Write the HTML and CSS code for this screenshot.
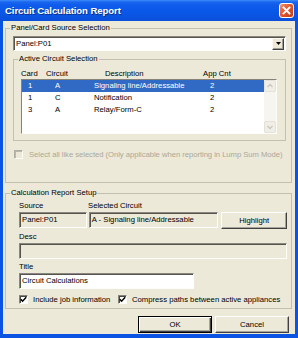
FILE: index.html
```html
<!DOCTYPE html>
<html>
<head>
<meta charset="utf-8">
<link rel="stylesheet" href="styles.css">
</head>
<body>
<div class="window">
  <div class="titlebar">
    <span class="title">Circuit Calculation Report</span>
    <span class="close">
      <svg width="15" height="15" viewBox="0 0 15 15">
        <defs>
          <linearGradient id="cg" x1="0" y1="0" x2="1" y2="1">
            <stop offset="0" stop-color="#F09A7C"/>
            <stop offset="0.45" stop-color="#E2582F"/>
            <stop offset="1" stop-color="#C23A12"/>
          </linearGradient>
        </defs>
        <rect x="0.5" y="0.5" width="14" height="14" rx="2.5" fill="url(#cg)" stroke="#fff"/>
        <path d="M4.5 4.5 L10.5 10.5 M10.5 4.5 L4.5 10.5" stroke="#fff" stroke-width="1.8" stroke-linecap="square"/>
      </svg>
    </span>
  </div>
  <div class="content">
    <fieldset class="group g1">
      <legend>Panel/Card Source Selection</legend>
      <div class="combo">
        <span class="combo-text">Panel:P01</span>
        <span class="combo-btn"><svg width="5" height="3" viewBox="0 0 5 3"><polygon points="0,0 5,0 2.5,3" fill="#000"/></svg></span>
      </div>
      <fieldset class="group g-inner">
        <legend>Active Circuit Selection</legend>
        <div class="head">
          <span class="h-card">Card</span>
          <span class="h-circ">Circuit</span>
          <span class="h-desc">Description</span>
          <span class="h-cnt">App Cnt</span>
        </div>
        <div class="list">
          <div class="rows">
            <div class="row sel"><span class="c-card">1</span><span class="c-circ">A</span><span class="c-desc">Signaling line/Addressable</span><span class="c-cnt">2</span></div>
            <div class="row"><span class="c-card">1</span><span class="c-circ">C</span><span class="c-desc">Notification</span><span class="c-cnt">2</span></div>
            <div class="row"><span class="c-card">3</span><span class="c-circ">A</span><span class="c-desc">Relay/Form-C</span><span class="c-cnt">2</span></div>
          </div>
          <div class="vscroll">
            <span class="sb-btn"><svg width="10" height="10" viewBox="0 0 10 10"><polyline points="2.5,6 5,3.5 7.5,6" fill="none" stroke="#C9C7BC" stroke-width="1.3"/></svg></span>
            <span class="sb-track"></span>
            <span class="sb-btn"><svg width="10" height="10" viewBox="0 0 10 10"><polyline points="2.5,4 5,6.5 7.5,4" fill="none" stroke="#C9C7BC" stroke-width="1.3"/></svg></span>
          </div>
        </div>
      </fieldset>
      <div class="check disabled g1-check">
        <span class="box"></span>
        <span class="check-label">Select all like selected (Only applicable when reporting in Lump Sum Mode)</span>
      </div>
    </fieldset>

    <fieldset class="group g2">
      <legend>Calculation Report Setup</legend>
      <div class="labels-row">
        <span class="lbl-source">Source</span>
        <span class="lbl-sel">Selected Circuit</span>
      </div>
      <div class="fields-row">
        <div class="field ro f-source">Panel:P01</div>
        <div class="field ro f-sel">A - Signaling line/Addressable</div>
        <button class="btn b-highlight">Highlight</button>
      </div>
      <div class="lbl">Desc</div>
      <div class="field ro f-desc"></div>
      <div class="lbl">Title</div>
      <div class="field f-title">Circuit Calculations</div>
      <div class="checks-row">
        <div class="check c1"><span class="box"><svg width="7" height="7" viewBox="0 0 7 7"><polyline points="0.8,3.2 2.6,5.2 6.2,1.3" fill="none" stroke="#000" stroke-width="1.5"/></svg></span><span class="check-label">Include job information</span></div>
        <div class="check c2"><span class="box"><svg width="7" height="7" viewBox="0 0 7 7"><polyline points="0.8,3.2 2.6,5.2 6.2,1.3" fill="none" stroke="#000" stroke-width="1.5"/></svg></span><span class="check-label">Compress paths between active appliances</span></div>
      </div>
    </fieldset>

    <div class="buttons">
      <button class="btn default b-ok">OK</button>
      <button class="btn b-cancel">Cancel</button>
    </div>
  </div>
</div>
</body>
</html>
```
FILE: styles.css
```css
* { box-sizing: border-box; }
html, body { margin: 0; padding: 0; }
body {
  width: 298px;
  height: 338px;
  overflow: hidden;
  font-family: "Liberation Sans", Arial, sans-serif;
  font-size: 7.7px;
  color: #000;
  background: #0A53E2;
}
.window {
  width: 298px;
  height: 338px;
  display: flex;
  flex-direction: column;
  background: #0B54E3;
  padding: 0 3px 4px;
}
.titlebar {
  height: 21px;
  margin: 0 -3px;
  flex: none;
  display: flex;
  align-items: center;
  justify-content: space-between;
  padding: 0 4px 1px 5px;
  background: linear-gradient(to bottom, #3E8CF9 0, #1A66F0 2px, #0F5CEC 5px, #0A58E8 12px, #0A52DE 18px, #0A4FD8 21px);
}
.title {
  color: #fff;
  font-weight: bold;
  font-size: 9.6px;
  letter-spacing: -0.1px;
  text-shadow: 1px 1px 0 #0A2F8C;
}
.close { display: flex; width: 15px; height: 15px; }
.content {
  flex: 1;
  background: #ECE9D8;
  display: flex;
  flex-direction: column;
  padding-top: 2px;
}
.group {
  margin: 0;
  border: 1px solid #C3C0B1;
  min-width: 0;
}
.group legend {
  padding: 0 1px;
  height: 10px;
  line-height: 10px;
}
.g1 {
  margin: 0 3px 0 2px;
  padding: 3px 5px 0 7px;
  height: 160px;
}
.g1 > legend { margin-left: -3px; }
.combo {
  height: 15px;
  display: flex;
  align-items: center;
  background: #fff;
  border: 1px solid;
  border-color: #8A887E #FDFDFB #FDFDFB #8A887E;
  box-shadow: inset 1px 1px 0 #55544F;
  padding: 1px 1px 1px 2px;
}
.combo-text { flex: 1; line-height: 12px; }
.combo-btn {
  width: 12px;
  height: 12px;
  display: flex;
  align-items: center;
  justify-content: center;
  background: #ECE9D8;
  border: 1px solid;
  border-color: #FAF9F4 #404040 #404040 #FAF9F4;
  box-shadow: inset -1px -1px 0 #A09E94;
}
.g-inner {
  margin-top: 3px;
  padding: 4px 8px 6px 7px;
}
.g-inner > legend { margin-left: -3px; }
.head {
  display: flex;
  height: 11px;
  line-height: 11px;
}
.h-card { width: 25px; }
.h-circ { width: 59px; }
.h-desc { width: 98px; }
.list {
  height: 55px;
  display: flex;
  background: #fff;
  border: 1px solid;
  border-color: #85837A #FCFCF9 #FCFCF9 #85837A;
}
.rows { flex: 1; display: flex; flex-direction: column; }
.row {
  display: flex;
  height: 12px;
  line-height: 11px;
}
.row.sel { background: #316AC5; color: #fff; }
.c-card { width: 27px; padding-left: 6px; }
.c-circ { width: 39px; padding-left: 6px; }
.c-desc { width: 110px; padding-left: 6px; }
.c-cnt { padding-left: 12px; }
.vscroll {
  width: 12px;
  display: flex;
  flex-direction: column;
  background: #F6F5EF;
}
.sb-btn {
  height: 12px;
  display: flex;
  align-items: center;
  justify-content: center;
  background: #EFEEE7;
  border: 1px solid #E4E2D8;
  border-radius: 2px;
}
.sb-track { flex: 1; }
.check {
  display: flex;
  align-items: center;
  height: 11px;
}
.check .box {
  width: 9px;
  height: 9px;
  flex: none;
  display: flex;
  align-items: center;
  justify-content: center;
  background: #fff;
  border: 1px solid;
  border-color: #85837A #FCFCF9 #FCFCF9 #85837A;
  box-shadow: inset 1px 1px 0 #4A4944;
}
.check.disabled .box { background: #ECE9D8; box-shadow: inset 1px 1px 0 #B9B7AD; border-color: #B0AEA3 #FCFCF9 #FCFCF9 #B0AEA3; }
.check.disabled .check-label { color: #ACA899; }
.g1-check { margin-top: 8px; margin-left: 1px; }
.g1-check .check-label { margin-left: 6px; white-space: nowrap; letter-spacing: -0.05px; }
.g2 {
  margin: 5px 3px 0 2px;
  padding: 2px 4px 0 13px;
  height: 121px;
}
.g2 > legend { margin-left: -9px; }
.labels-row { display: flex; height: 11px; line-height: 11px; }
.lbl-source { width: 69px; }
.fields-row {
  display: flex;
  margin-top: 1px;
  align-items: flex-start;
}
.field {
  height: 16px;
  line-height: 13px;
  padding: 0 2px;
  background: #fff;
  border: 1px solid;
  border-color: #8A887E #FDFDFB #FDFDFB #8A887E;
  box-shadow: inset 1px 1px 0 #55544F;
  white-space: nowrap;
  overflow: hidden;
}
.field.ro { background: #ECE9D8; }
.f-source { width: 68px; }
.f-sel { width: 130px; margin-left: 2px; }
.btn {
  font-family: inherit;
  font-size: inherit;
  color: #000;
  background: #ECE9D8;
  border: 1px solid;
  border-color: #FFFFFF #404040 #404040 #FFFFFF;
  box-shadow: inset -1px -1px 0 #A7A59A;
  padding: 0;
  margin: 0;
  height: 17px;
  line-height: 14px;
  text-align: center;
}
.b-highlight { width: 66px; margin-left: 3px; }
.lbl { height: 11px; line-height: 11px; margin-top: 2px; }
.f-desc { margin-top: 1px; margin-right: 0; }
.f-title { width: 175px; margin-top: 1px; }
.checks-row { display: flex; margin-top: 5px; }
.check-label { margin-left: 5px; }
.c1 { width: 99px; }
.buttons {
  display: flex;
  justify-content: flex-end;
  gap: 3px;
  margin-top: 7px;
  padding-right: 6px;
}
.b-ok { width: 74px; }
.b-cancel { width: 74px; }
.btn.default {
  border: 1px solid #000;
  box-shadow: inset 1px 1px 0 #fff, inset -1px -1px 0 #404040, inset -2px -2px 0 #A7A59A;
}
```
